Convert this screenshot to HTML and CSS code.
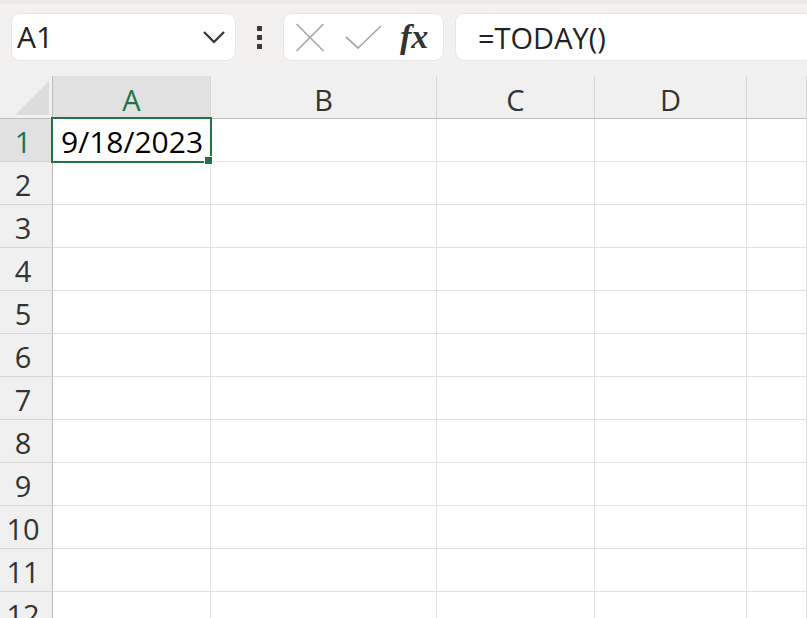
FILE: index.html
```html
<!DOCTYPE html>
<html lang="en">
<head>
  <meta charset="UTF-8" />
  <title>Workbook</title>
  <meta name="viewport" content="width=device-width, initial-scale=1.0"/>
  <link rel="stylesheet" href="styles.css">
</head>
<body>
  <div class="toolbar">
    <div class="name-box">
      <span class="name-text">A1</span>
      <svg class="chevron" width="24" height="14" viewBox="0 0 24 14"><path d="M2 2 L12 12 L22 2" fill="none" stroke="#333" stroke-width="2.2"/></svg>
    </div>
    <div class="dots"><span></span><span></span><span></span></div>
    <div class="fn-box">
      <svg width="30" height="29" viewBox="0 0 30 29"><path d="M1.5 1 L28.5 28 M28.5 1 L1.5 28" stroke="#a8a8a8" stroke-width="1.7" fill="none"/></svg>
      <svg width="37" height="24" viewBox="0 0 37 24"><path d="M1 12 L13 23 L36 1" stroke="#a8a8a8" stroke-width="1.7" fill="none"/></svg>
      <span class="fx">fx</span>
    </div>
    <div class="formula">=TODAY()</div>
  </div>

  <div class="sheet">
    <div class="corner"><span class="tri"></span></div>
    <div class="col-head active">A</div>
    <div class="col-head">B</div>
    <div class="col-head">C</div>
    <div class="col-head">D</div>
    <div class="col-head"></div>
  </div>

  <script>
    const sheet = document.querySelector(".sheet");
    for (let r = 1; r <= 12; r++) {
      const head = document.createElement("div");
      head.className = "row-head" + (r === 1 ? " active" : "");
      head.textContent = r;
      sheet.appendChild(head);
      for (let c = 0; c < 5; c++) {
        const cell = document.createElement("div");
        cell.className = "cell";
        if (r === 1 && c === 0) {
          cell.className += " selected";
          cell.textContent = "9/18/2023";
        }
        sheet.appendChild(cell);
      }
    }
  </script>
</body>
</html>
```

FILE: styles.css
```css
:root {
  --green: #217346;
  --bar-bg: #f3f1ef;
  --head-bg: #f0f0f0;
  --head-active: #e1e1e1;
  --grid: #e1e1e1;
  --head-line: #d6d6d6;
  --text: #222;
}
* {
  box-sizing: border-box;
}
body {
  margin: 0;
  font-family: 'Open Sans', 'Noto Sans', sans-serif;
  color: var(--text);
  background: #fff;
  overflow: hidden;
  width: 807px;
  height: 618px;
}
.toolbar {
  height: 76px;
  background: var(--bar-bg);
  border-top: 4px solid #ebe8e6;
  display: flex;
  align-items: flex-start;
  padding: 9px 0 0 11px;
}
.name-box {
  width: 225px;
  height: 48px;
  background: #fff;
  border: 1px solid #e6e6e6;
  border-radius: 9px;
  display: flex;
  align-items: center;
  justify-content: space-between;
  padding: 0 9px 0 5px;
}
.name-text {
  font-size: 30px;
  line-height: 1;
}
.dots {
  width: 47px;
  height: 48px;
  display: flex;
  flex-direction: column;
  align-items: center;
  justify-content: center;
  gap: 4px;
}
.dots span {
  width: 5px;
  height: 5px;
  background: #3a3a3a;
}
.fn-box {
  width: 161px;
  height: 48px;
  background: #fff;
  border: 1px solid #e6e6e6;
  border-radius: 9px;
  display: flex;
  align-items: center;
  padding: 0 0 0 11px;
}
.fn-box svg + svg {
  margin-left: 20px;
}
.fx {
  font-family: 'Liberation Serif', serif;
  font-style: italic;
  font-weight: bold;
  font-size: 34px;
  line-height: 1;
  color: #333;
  margin-left: 18px;
}
.formula {
  margin-left: 11px;
  flex: 1;
  height: 48px;
  background: #fff;
  border: 1px solid #e6e6e6;
  border-right: none;
  border-radius: 9px 0 0 9px;
  display: flex;
  align-items: center;
  padding-left: 22px;
  font-size: 29px;
}
.sheet {
  display: grid;
  grid-template-columns: 53px 158px 226px 158px 152px 60px;
  grid-template-rows: 43px repeat(12, 43px);
}
.corner {
  background: var(--head-bg);
  border-right: 1px solid #bdbdbd;
  border-bottom: 1px solid #bdbdbd;
  position: relative;
}
.tri {
  position: absolute;
  right: 3px;
  bottom: 3px;
  width: 0;
  height: 0;
  border-left: 34px solid transparent;
  border-bottom: 34px solid #dcdcdc;
}
.col-head {
  background: var(--head-bg);
  border-right: 1px solid var(--head-line);
  border-bottom: 1px solid #bdbdbd;
  display: flex;
  align-items: center;
  justify-content: center;
  font-size: 29px;
  color: #333;
  padding-top: 4px;
}
.col-head.active,
.row-head.active {
  background: var(--head-active);
  color: var(--green);
}
.row-head {
  background: var(--head-bg);
  border-right: 1px solid #bdbdbd;
  border-bottom: 1px solid var(--head-line);
  display: flex;
  align-items: center;
  justify-content: center;
  font-size: 29px;
  color: #333;
  padding-right: 6px;
  padding-top: 2px;
}
.cell {
  border-right: 1px solid var(--grid);
  border-bottom: 1px solid var(--grid);
  font-size: 30px;
  display: flex;
  align-items: center;
  color: #000;
  padding-top: 3px;
}
.cell.selected {
  position: relative;
  padding-left: 8px;
}
.cell.selected::after {
  content: "";
  position: absolute;
  left: -2px;
  top: -2px;
  right: -2px;
  bottom: -2px;
  border: 2px solid var(--green);
}
.cell.selected::before {
  content: "";
  position: absolute;
  right: -3px;
  bottom: -4px;
  width: 7px;
  height: 7px;
  background: var(--green);
  border: 1px solid #fff;
  z-index: 1;
}
```
